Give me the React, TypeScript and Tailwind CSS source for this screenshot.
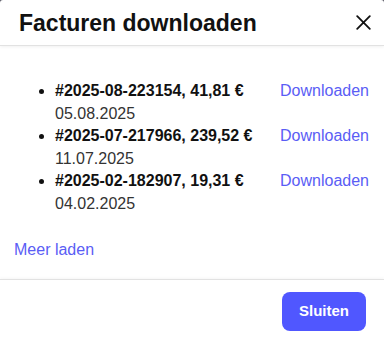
import React from "react";

const items = [
  { id: "#2025-08-223154, 41,81 €", date: "05.08.2025" },
  { id: "#2025-07-217966, 239,52 €", date: "11.07.2025" },
  { id: "#2025-02-182907, 19,31 €", date: "04.02.2025" },
];

export default function App() {
  return (
    <div className="w-[384px] h-[341px] bg-[#5a5a66] overflow-hidden" style={{ fontFamily: '"Liberation Sans", Arial, sans-serif' }}>
      <div className="w-full h-full bg-white rounded-t-[3px] flex flex-col text-[#1a1a1a]">
        <div className="h-[46px] flex items-center justify-between pl-[19px] pr-[13px] border-b border-[#e2e2e2] shadow-[0_1px_3px_rgba(0,0,0,0.06)]">
          <h2 className="text-[23px] font-bold text-[#111] leading-none pt-[2px]">Facturen downloaden</h2>
          <button className="w-[16px] h-[16px] flex items-center justify-center">
            <svg width="15" height="15" viewBox="0 0 15 15" fill="none">
              <path d="M1.2 1.2L13.8 13.8M13.8 1.2L1.2 13.8" stroke="#111" strokeWidth="1.8" strokeLinecap="round" />
            </svg>
          </button>
        </div>
        <div className="flex-1 pl-[14px] pr-[15px] pt-[34px]">
          <ul className="list-disc pl-[41px] text-[16px] leading-[22.5px]">
            {items.map((it) => (
              <li key={it.id} className="marker:text-[#111]">
                <div className="flex justify-between items-start">
                  <div>
                    <div className="font-bold text-[#111]">{it.id}</div>
                    <div className="text-[#333]">{it.date}</div>
                  </div>
                  <a className="text-[#5a5df5] cursor-pointer">Downloaden</a>
                </div>
              </li>
            ))}
          </ul>
          <div className="mt-[24px] text-[16px] leading-[22px] text-[#5a5df5]">Meer laden</div>
        </div>
        <div className="h-[62px] border-t border-[#e2e2e2] shadow-[0_-1px_3px_rgba(0,0,0,0.04)] flex items-start justify-end pr-[18px] pt-[12px]">
          <button className="h-[39px] w-[84px] rounded-[8px] bg-[#5057ff] text-white font-bold text-[15px]">Sluiten</button>
        </div>
      </div>
    </div>
  );
}
